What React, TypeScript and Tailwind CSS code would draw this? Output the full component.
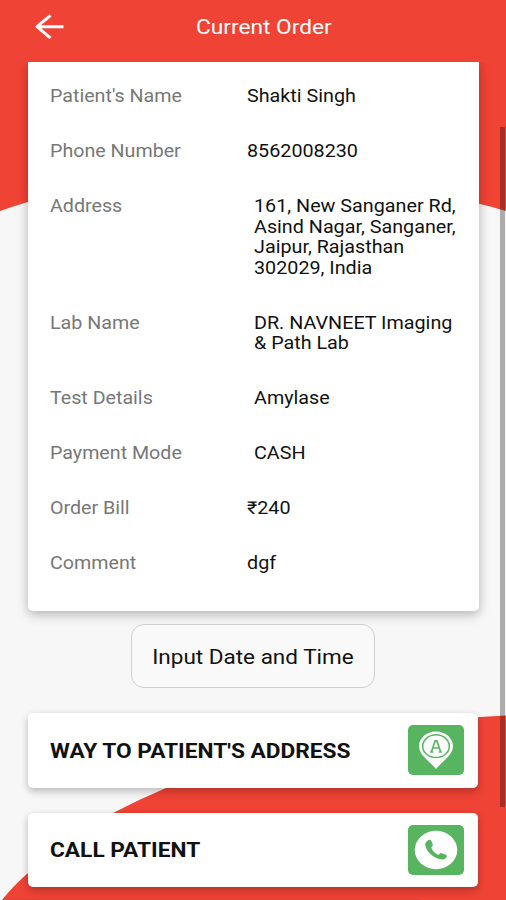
import type { ReactNode } from "react";

type Row = { label: string; lines: string[]; indent?: boolean };

const rows: Row[] = [
  { label: "Patient's Name", lines: ["Shakti Singh"] },
  { label: "Phone Number", lines: ["8562008230"] },
  {
    label: "Address",
    lines: ["161, New Sanganer Rd,", "Asind Nagar, Sanganer,", "Jaipur, Rajasthan", "302029, India"],
    indent: true,
  },
  { label: "Lab Name", lines: ["DR. NAVNEET Imaging", "& Path Lab"], indent: true },
  { label: "Test Details", lines: ["Amylase"], indent: true },
  { label: "Payment Mode", lines: ["CASH"], indent: true },
  { label: "Order Bill", lines: ["₹240"] },
  { label: "Comment", lines: ["dgf"] },
];

function Backdrop() {
  return (
    <svg className="absolute inset-0 -z-10" width="506" height="900" viewBox="0 0 506 900">
      <rect width="506" height="900" fill="#f7f7f7" />
      <path d="M0 0H506V211Q493 207 480 204Q253 140 28 202Q14 206 0 211Z" fill="#ef4335" />
      <path d="M2 900Q14 885 28 873Q66 838 115 812Q140 799 166 788Q310 728 480 717L506 715.5V900Z" fill="#ef4335" />
      <path d="M3 899.5H421" stroke="#d0493d" strokeWidth="1" />
    </svg>
  );
}

function ActionCard({ title, children }: { title: string; children: ReactNode }) {
  return (
    <button className="flex h-[74.5px] w-[450px] items-center justify-between rounded-[5px] bg-white pl-[22px] pr-3.5 shadow-[0_4px_8px_rgba(0,0,0,0.2),0_1px_6px_rgba(0,0,0,0.08)]">
      <span className="mt-px origin-left scale-x-[1.135] whitespace-nowrap text-[20px] font-bold leading-6 text-[#111]">{title}</span>
      <span className="flex h-[50px] w-14 items-center justify-center rounded-[5px] bg-[#57b560]">{children}</span>
    </button>
  );
}

export default function App() {
  return (
    <div className="relative isolate flex h-[900px] w-[506px] flex-col overflow-hidden font-['Roboto','Noto_Sans',sans-serif]">
      <Backdrop />
      <header className="z-10 flex h-[62px] shrink-0 items-center bg-[#ef4335]">
        <svg className="mb-2 ml-[34px]" width="31" height="28" viewBox="0 0 31 28" fill="none" stroke="#fff" strokeWidth="3" strokeLinejoin="round">
          <path d="M29.5 13.7H4M16.6 2.3L3 13.7L16.6 25.1" />
        </svg>
        <h1 className="mb-[9px] ml-[131px] origin-left scale-x-[1.135] whitespace-nowrap text-[20px] leading-6 text-white">
          Current Order
        </h1>
      </header>

      <main className="flex flex-col items-center">
        <section className="flex h-[549px] w-[451px] flex-col gap-[34.4px] rounded-b-[5px] bg-white pl-[22px] pt-6 shadow-[0_4px_12px_rgba(0,0,0,0.22),0_1px_8px_rgba(0,0,0,0.08)]">
          {rows.map((row) => (
            <div key={row.label} className="flex text-[17.6px] leading-[20.6px]">
              <div className="w-[197px]">
                <span className="inline-block origin-left scale-x-[1.117] whitespace-nowrap text-[#777]">{row.label}</span>
              </div>
              <div className={row.indent ? "flex flex-col pl-[7px]" : "flex flex-col"}>
                {row.lines.map((line) => (
                  <span key={line} className="origin-left scale-x-[1.122] whitespace-nowrap text-[#111]">
                    {line}
                  </span>
                ))}
              </div>
            </div>
          ))}
        </section>

        <button className="mt-[12.5px] flex h-16 w-[244px] items-center justify-center rounded-[13px] border border-[#cfcfcf] bg-[#f9f9f9]">
          <span className="mt-0.5 scale-x-[1.12] whitespace-nowrap text-[20.1px] leading-6 text-[#111]">Input Date and Time</span>
        </button>

        <div className="mt-[25.5px] flex flex-col gap-[25px]">
          <ActionCard title="WAY TO PATIENT'S ADDRESS">
            <svg width="36" height="40" viewBox="0 0 36 40">
              <path d="M18 1.5C8.5 1.5 1 8 1 16.2C1 25 12 31.5 18 39C24 31.5 35 25 35 16.2C35 8 27.5 1.5 18 1.5Z" fill="#fff" />
              <ellipse cx="18" cy="16.2" rx="13.3" ry="11.4" fill="none" stroke="#57b560" strokeWidth="1.5" />
              <path d="M13.5 21.5L17.2 10.8H18.8L22.5 21.5M14.8 18H21.2M12.2 22H15.2M20.8 22H23.8" fill="none" stroke="#57b560" strokeWidth="1.7" />
            </svg>
          </ActionCard>
          <ActionCard title="CALL PATIENT">
            <svg width="44" height="40" viewBox="0 0 44 40">
              <ellipse cx="22" cy="20" rx="21.3" ry="19.2" fill="#fff" />
              <path
                d="M14.3 10.2C12 11.4 10.7 13.2 11.4 15.7C13.2 23 20.6 28.7 27.8 29.6C30.5 29.8 32.7 28.1 32.9 26.3C32.9 25.4 32.2 25 31.3 24.6L27.7 23.2C26.6 22.8 26 23.3 25.3 24.2C24.7 24.8 24.1 24.8 23.5 24.4C20.8 22.9 18.8 20.9 17.6 18.4C17.2 17.7 17.3 17.2 18 16.6C18.9 15.8 19.2 15.4 18.7 14.2L17.3 11C16.7 9.8 15.5 9.6 14.3 10.2Z"
                fill="#57b560"
              />
            </svg>
          </ActionCard>
        </div>
      </main>

      <div className="absolute left-[499.5px] top-[127px] z-20 h-[680px] w-[5px] bg-black/30" />
    </div>
  );
}
